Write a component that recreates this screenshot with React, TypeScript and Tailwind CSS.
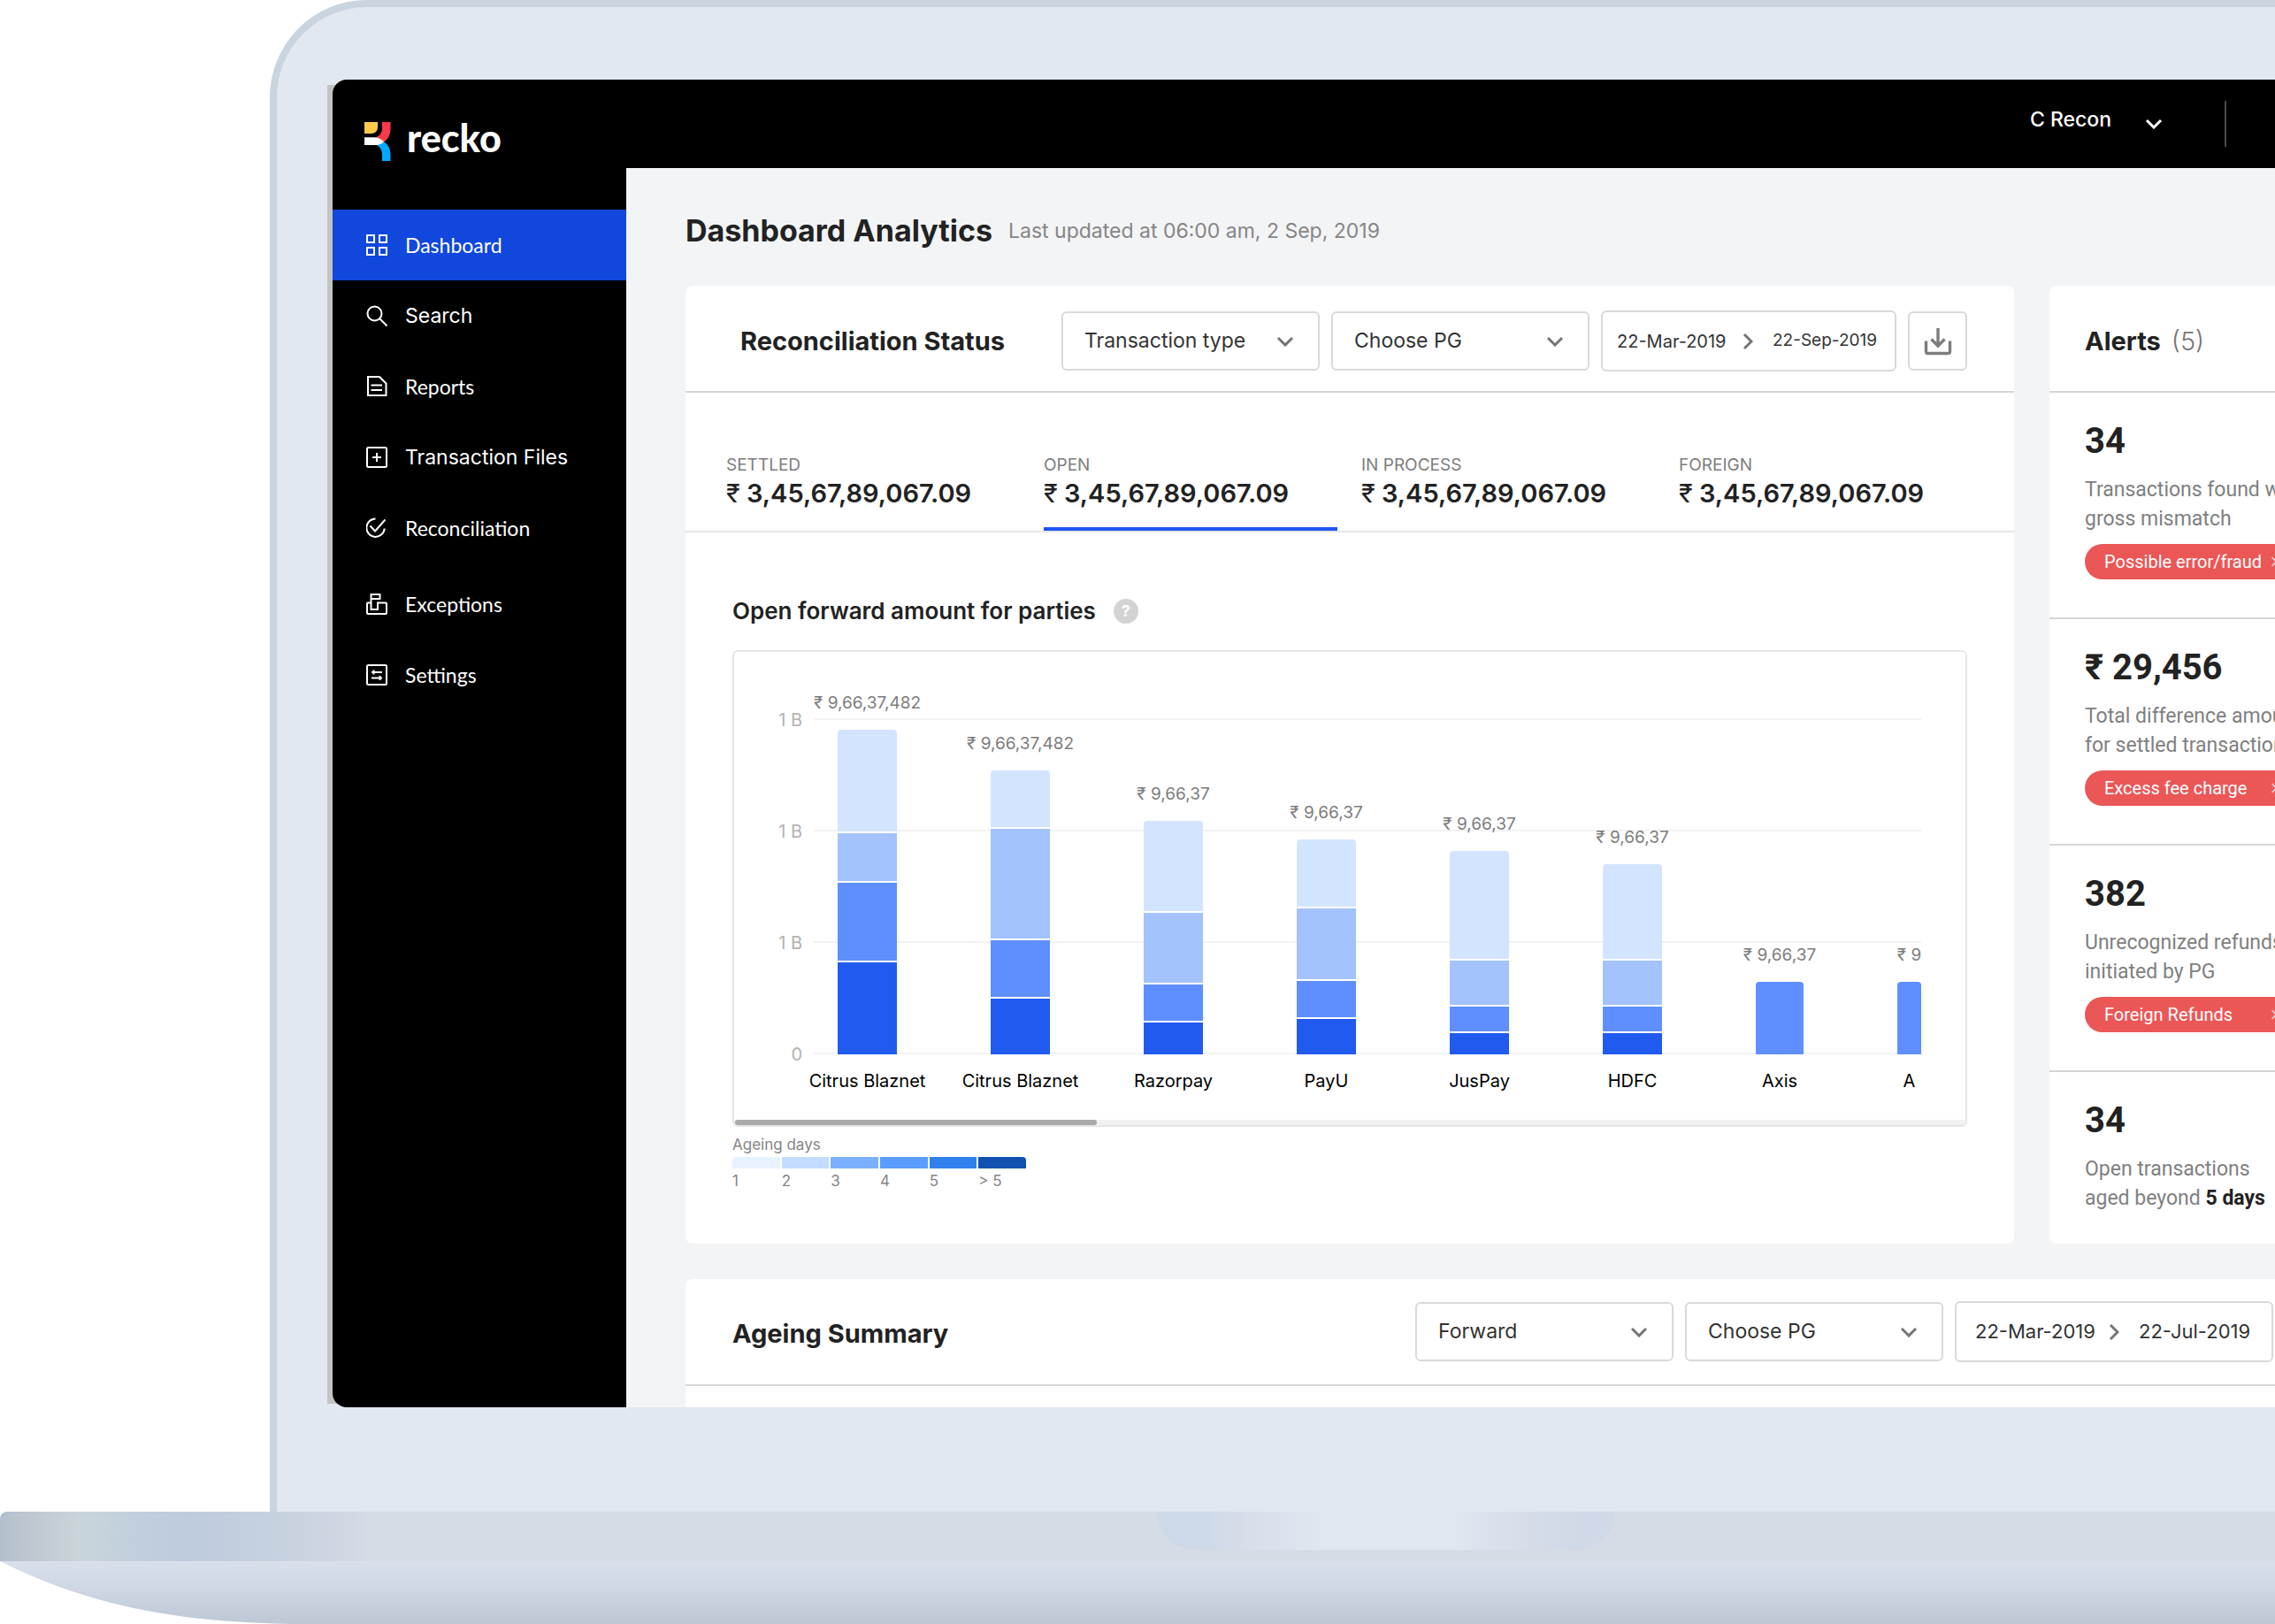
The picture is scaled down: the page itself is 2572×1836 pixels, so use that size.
import type { ReactNode } from "react";

const inter = "font-['Inter','Liberation_Sans',sans-serif]";
const lato = "font-['Lato','Liberation_Sans',sans-serif]";
const roboto = "font-['Roboto','Liberation_Sans',sans-serif]";

type NavItem = {
  label: string;
  font: string;
  icon: ReactNode;
  active?: boolean;
};

const mainNav: NavItem[] = [
  {
    label: "Dashboard",
    font: lato,
    active: true,
    icon: (
      <>
        <rect x="1" y="1" width="8" height="8" />
        <rect x="15" y="1" width="8" height="8" />
        <rect x="1" y="15" width="8" height="8" />
        <rect x="15" y="15" width="8" height="8" />
      </>
    ),
  },
  {
    label: "Search",
    font: inter,
    icon: (
      <>
        <circle cx="9.5" cy="9.5" r="8" />
        <path d="M15.5 15.5l8 8" />
      </>
    ),
  },
  {
    label: "Reports",
    font: lato,
    icon: (
      <>
        <path d="M2 1h13l7.5 7.5V22H2z" />
        <path d="M5.5 10.5h12.5M5.5 16h12.5" />
      </>
    ),
  },
  {
    label: "Transaction Files",
    font: inter,
    icon: (
      <>
        <rect x="1" y="1" width="22" height="22" rx="1.5" />
        <path d="M12 7v10M7 12h10" />
      </>
    ),
  },
  {
    label: "Reconciliation",
    font: lato,
    icon: (
      <>
        <path d="M10.5 1.5a10.2 10.2 0 1 0 10.2 11" />
        <path d="M4.5 9.5l5.5 6L21.5 2.5" />
      </>
    ),
  },
];

const moreNav: NavItem[] = [
  {
    label: "Exceptions",
    font: lato,
    icon: (
      <>
        <path d="M5.5 11V1h10v5h-10" />
        <path d="M5.5 11v7H13v-7.5h9a1 1 0 0 1 1 1V22a1 1 0 0 1-1 1H2a1 1 0 0 1-1-1V11.5a1 1 0 0 1 1-1h3.5" />
      </>
    ),
  },
  {
    label: "Settings",
    font: lato,
    icon: (
      <>
        <rect x="1" y="1" width="22" height="22" rx="1.5" />
        <path d="M6 9h12M6 15.5h12M8.5 6.5v5M15.5 13v5" />
      </>
    ),
  },
];

const tabs = ["SETTLED", "OPEN", "IN PROCESS", "FOREIGN"];

// segments run from the top of the bar to the bottom, in pixels
const bars = [
  { name: "Citrus Blaznet", value: "₹ 9,66,37,482", width: 67, segments: [115, 56, 90, 106] },
  { name: "Citrus Blaznet", value: "₹ 9,66,37,482", width: 67, segments: [64, 126, 66, 65] },
  { name: "Razorpay", value: "₹ 9,66,37", width: 67, segments: [102, 81, 43, 38] },
  { name: "PayU", value: "₹ 9,66,37", width: 67, segments: [76, 82, 43, 42] },
  { name: "JusPay", value: "₹ 9,66,37", width: 67, segments: [122, 52, 30, 26] },
  { name: "HDFC", value: "₹ 9,66,37", width: 67, segments: [107, 52, 30, 26] },
  { name: "Axis", value: "₹ 9,66,37", width: 54, segments: [82] },
  { name: "A", value: "₹ 9", width: 27, segments: [82] },
];

const segmentColors = ["bg-[#d3e4ff]", "bg-[#a3c2fe]", "bg-[#5f8ffe]", "bg-[#215aef]"];

const ageing = [
  { label: "1", color: "bg-[#e8f2ff]" },
  { label: "2", color: "bg-[#c4dcff]" },
  { label: "3", color: "bg-[#7ab0ff]" },
  { label: "4", color: "bg-[#5a9dff]" },
  { label: "5", color: "bg-[#2f80ed]" },
  { label: "> 5", color: "bg-[#1152ae]" },
];

const alerts = [
  { count: "34", lines: ["Transactions found with", "gross mismatch"], tag: "Possible error/fraud" },
  { count: "₹ 29,456", lines: ["Total difference amount", "for settled transactions"], tag: "Excess fee charge" },
  { count: "382", lines: ["Unrecognized refunds", "initiated by PG"], tag: "Foreign Refunds" },
];

function Chevron({ className, right }: { className: string; right?: boolean }) {
  return (
    <svg
      viewBox={right ? "0 0 12 20" : "0 0 20 12"}
      fill="none"
      stroke="currentColor"
      strokeWidth="3"
      aria-hidden="true"
      className={className}
    >
      <path d={right ? "M2 2l8 8-8 8" : "M2 2l8 8 8-8"} />
    </svg>
  );
}

function Logo() {
  return (
    <a href="#home" className="flex h-[147px] items-start gap-[18px] pt-12 pl-9 text-white">
      <svg viewBox="0 0 30 44" className="h-11 w-[30px]" aria-hidden="true">
        <path fill="#ffcb4f" d="M0 0h15v6a7 7 0 0 1-7 7H0z" />
        <path fill="#f93a4a" d="M20 0h9.500v7c0 7-2.500 12.500-7.500 15.500-3-3.500-6-4.800-10-5.200 5-1 8-5 8-10.300z" />
        <path fill="#03a9ff" d="M22 22.300c5 3 7.500 8.500 7.500 15V44H20v-7c0-6-3-10.500-8-11.500 4-.3 8-1.500 10-3.200z" />
        <path fill="#fff" d="M0 17.300h11c5 0 8.500 2 11 5-2.500 2.500-5 3.700-9 3.700H0z" />
      </svg>
      <span className={`${lato} text-[43px] leading-9 font-black`}>recko</span>
    </a>
  );
}

function NavList({ items }: { items: NavItem[] }) {
  return (
    <ul>
      {items.map((item) => (
        <li key={item.label}>
          <a
            href="#nav"
            className={`flex h-20 items-center gap-5 pl-[38px] text-white ${item.active ? "bg-[#1147dd]" : ""}`}
          >
            <svg viewBox="0 0 24 24" fill="none" stroke="currentColor" strokeWidth="2" className="size-6" aria-hidden="true">
              {item.icon}
            </svg>
            <span className={`${item.font} text-[23px]`}>{item.label}</span>
          </a>
        </li>
      ))}
    </ul>
  );
}

function Select({ label }: { label: string }) {
  return (
    <div className="relative w-[292px]">
      <select
        aria-label={label}
        className="h-[67px] w-full appearance-none rounded-md border-2 border-[#d9d9d9] bg-white pl-6 text-[23px] text-[#333]"
      >
        <option>{label}</option>
      </select>
      <Chevron className="pointer-events-none absolute top-7 right-[29px] h-3 w-5 text-[#757575]" />
    </div>
  );
}

function DateRange({ from, to, wide }: { from: string; to: string; wide?: boolean }) {
  return (
    <div
      className={`flex h-[69px] items-center rounded-md border-2 border-[#d9d9d9] text-[#333] ${
        wide ? "w-[360px] pl-[21px] text-[22px]" : "w-[334px] pl-4 text-[20px]"
      }`}
    >
      <input aria-label="From" defaultValue={from} className={wide ? "w-[137px]" : "w-32"} />
      <Chevron right className="mr-[22px] ml-3.5 h-5 w-3 text-[#757575]" />
      <input aria-label="To" defaultValue={to} className={wide ? "w-32" : "w-32 text-[19px]"} />
    </div>
  );
}

function Chart() {
  return (
    <div className="mt-7 rounded-md border-2 border-[#e6e6e6]">
      <div className="flex pt-[63px] pr-[50px] pl-[50px]">
        <div className="flex w-[27px] flex-col gap-[98px] text-right text-[20px] leading-7 whitespace-nowrap text-[#b3b3b3]">
          <span>1 B</span>
          <span>1 B</span>
          <span>1 B</span>
          <span>0</span>
        </div>
        <div className="relative ml-[13px] min-w-0 flex-1">
          <div className="flex flex-col gap-[124px] pt-3">
            <div className="h-0.5 bg-[#f3f3f3]" />
            <div className="h-0.5 bg-[#f3f3f3]" />
            <div className="h-0.5 bg-[#f3f3f3]" />
            <div className="h-0.5 bg-[#f3f3f3]" />
          </div>
          <div className="absolute right-0 bottom-0 -left-4 flex items-end gap-[106px] overflow-hidden pl-[43px]">
            {bars.map((bar, i) => (
              <div key={i} className="flex shrink-0 flex-col items-center" style={{ width: bar.width }}>
                <span className="mb-4 text-[19px] leading-7 whitespace-nowrap text-[#7d7d7d]">{bar.value}</span>
                <div className="flex w-full flex-col overflow-hidden rounded-t">
                  {bar.segments.map((height, s) => (
                    <div
                      key={s}
                      className={`${bar.segments.length === 1 ? "bg-[#5f8ffe]" : segmentColors[s]} ${s > 0 ? "border-t-2 border-white" : ""}`}
                      style={{ height }}
                    />
                  ))}
                </div>
                <span className="mt-4 text-[20px] leading-7 whitespace-nowrap text-black">{bar.name}</span>
              </div>
            ))}
          </div>
          <div className="h-11" />
        </div>
      </div>
      <div className="mt-[30px] bg-[#f2f2f2] px-px">
        <div className="h-1.5 w-[409px] rounded-full bg-[#a9a9a9]" />
      </div>
    </div>
  );
}

function ReconciliationStatus() {
  return (
    <section className="rounded-lg bg-white">
      <div className="flex h-[121px] items-center border-b-2 border-[#d6d6d6] pt-1.5 pr-[53px] pl-[62px]">
        <h2 className="flex-1 text-[29px] font-bold whitespace-nowrap text-[#222]">Reconciliation Status</h2>
        <div className="flex items-center gap-[13px]">
          <Select label="Transaction type" />
          <Select label="Choose PG" />
          <DateRange from="22-Mar-2019" to="22-Sep-2019" />
          <button
            aria-label="Download"
            className="flex h-[67px] w-[67px] items-center justify-center rounded-md border-2 border-[#d9d9d9] text-[#7d7d7d]"
          >
            <svg viewBox="0 0 32 32" fill="none" stroke="currentColor" strokeWidth="3.400" className="size-8" aria-hidden="true">
              <path d="M16 1v20M8.500 13.500l7.500 7.500 7.500-7.500M2.500 15.500v12a2 2 0 0 0 2 2h23a2 2 0 0 0 2-2v-12" />
            </svg>
          </button>
        </div>
      </div>
      <div className="flex gap-[27px] border-b-2 border-[#e6e6e6] pt-[70px] pl-[46px]">
        {tabs.map((tab) => (
          <button
            key={tab}
            className={`w-[332px] border-b-4 pb-[18px] text-left ${tab === "OPEN" ? "border-[#1e55f2]" : "border-transparent"}`}
          >
            <span className="block text-[19px] leading-6 text-[#7d7d7d]">{tab}</span>
            <span className="block text-[29px] leading-10 font-semibold text-[#222]">
              <span className="font-normal">₹</span> 3,45,67,89,067.09
            </span>
          </button>
        ))}
      </div>
      <div className="px-[53px] pt-[73px] pb-[59px]">
        <div className="flex items-center gap-5">
          <h3 className="text-[26px] leading-8 font-semibold text-[#222]">Open forward amount for parties</h3>
          <button aria-label="Help" className="size-7 rounded-full bg-[#d3d3d3] text-[18px] leading-7 font-bold text-white">
            ?
          </button>
        </div>
        <Chart />
        <p className="mt-2 text-[17px] leading-6 text-[#858585]">Ageing days</p>
        <div className="mt-0.5 grid w-[332px] grid-cols-6 gap-0.5 overflow-hidden rounded-t-sm text-[17px] text-[#858585]">
          {ageing.map((step) => (
            <div key={step.label}>
              <div className={`h-[13px] ${step.color}`} />
              <span className="block pt-0.5 leading-6">{step.label}</span>
            </div>
          ))}
        </div>
      </div>
    </section>
  );
}

function Alerts() {
  return (
    <section className="min-w-0 overflow-hidden rounded-l-lg bg-white">
      <div className="flex h-[121px] items-center gap-3 border-b-2 border-[#d6d6d6] pt-1.5 pl-10 text-[29px]">
        <h2 className="font-bold text-[#222]">Alerts</h2>
        <span className="font-light text-[#757575]">(5)</span>
      </div>
      <div className={`${roboto} whitespace-nowrap`}>
        {alerts.map((alert) => (
          <div key={alert.tag} className="border-b-2 border-[#d6d6d6] pt-[31px] pb-[43px] pl-10">
            <p className="text-[40px] leading-12 font-bold text-[#222]">{alert.count}</p>
            <p className="mt-3.5 text-[23px] leading-[33px] text-[#808080]">
              {alert.lines[0]}
              <br />
              {alert.lines[1]}
            </p>
            <button className="mt-3 flex h-10 w-[236px] items-center justify-between rounded-full bg-[#eb5757] pr-4 pl-[22px] text-[20px] text-white">
              {alert.tag}
              <Chevron right className="h-3 w-3 text-white/70" />
            </button>
          </div>
        ))}
        <div className="pt-[31px] pl-10">
          <p className="text-[40px] leading-12 font-bold text-[#222]">34</p>
          <p className="mt-3.5 text-[23px] leading-[33px] text-[#808080]">
            Open transactions
            <br />
            aged beyond <strong className="text-[#222]">5 days</strong>
          </p>
        </div>
      </div>
    </section>
  );
}

function AgeingSummary() {
  return (
    <section className="rounded-tl-lg bg-white pb-6">
      <div className="flex h-[121px] items-center justify-between border-b-2 border-[#d6d6d6] pr-0.5 pl-[53px]">
        <h2 className="pt-1 text-[29px] font-bold text-[#222]">Ageing Summary</h2>
        <div className="flex items-center gap-[13px]">
          <Select label="Forward" />
          <Select label="Choose PG" />
          <DateRange from="22-Mar-2019" to="22-Jul-2019" wide />
        </div>
      </div>
    </section>
  );
}

function LaptopBase() {
  return (
    <div>
      <div className="flex h-14 justify-center rounded-tl-lg bg-[#d5dce5] bg-[linear-gradient(90deg,#b3c0ce_0px,#bcc6d0_28px,#cad5da_92px,#c1cfde_150px,#becbdd_210px,#c6d1df_310px,#d0d5e2_378px,#d5dce5_420px)]">
        <div className="ml-[562px] h-[43px] w-[518px] rounded-b-[48px] bg-[linear-gradient(90deg,#cdd9e8_0%,#cdd9e8_10%,#d8deea_20%,#e0e7f0_36%,#e0e7f0_65%,#d8deea_78%,#cfd9e7_92%)]" />
      </div>
      <div className="bg-linear-to-b from-[#d9e0ec] via-[#cdd5e3] to-[#bdc8d4]">
        <svg viewBox="0 0 330 71" className="h-[71px] w-[330px]" aria-hidden="true">
          <path fill="#fff" d="M0 0C100 50 200 69 330 71H0z" />
        </svg>
      </div>
    </div>
  );
}

export default function App() {
  return (
    <div className={`${inter} overflow-hidden bg-white`}>
      <div className="ml-[305px] rounded-tl-[110px] border-t-8 border-l-8 border-[#c9d4df] bg-[#e1e8f0] pt-[82px] pb-[118px] pl-[63px]">
        <div className="relative">
          <div className="absolute top-1.5 bottom-1 -left-1.5 w-6 bg-[#c3c3c3]" />
          <div className="relative flex overflow-hidden rounded-l-2xl bg-black">
            <nav className="w-[332px] shrink-0">
              <Logo />
              <NavList items={mainNav} />
              <div className="mt-1.5">
                <NavList items={moreNav} />
              </div>
            </nav>
            <div className="min-w-0 flex-1">
              <header className="flex h-[100px] items-center justify-end pr-[55px]">
                <button className="flex h-[34px] items-start gap-[38px] text-[23px] leading-6 font-medium text-white">
                  C Recon
                  <Chevron className="h-3 w-5 self-center" />
                </button>
                <div className="ml-[70px] h-[52px] w-0.5 bg-[#4a4a4a]" />
              </header>
              <main className="bg-[#f3f4f6] pt-11 pl-[67px]">
                <div className="flex items-center gap-[18px]">
                  <h1 className="text-[34px] leading-[54px] font-bold text-[#222]">Dashboard Analytics</h1>
                  <p className="text-[23px] text-[#858585]">Last updated at 06:00 am, 2 Sep, 2019</p>
                </div>
                <div className="mt-[35px] grid grid-cols-[minmax(0,1fr)_255px] gap-10">
                  <ReconciliationStatus />
                  <Alerts />
                </div>
                <div className="mt-10">
                  <AgeingSummary />
                </div>
              </main>
            </div>
          </div>
        </div>
      </div>
      <LaptopBase />
    </div>
  );
}
